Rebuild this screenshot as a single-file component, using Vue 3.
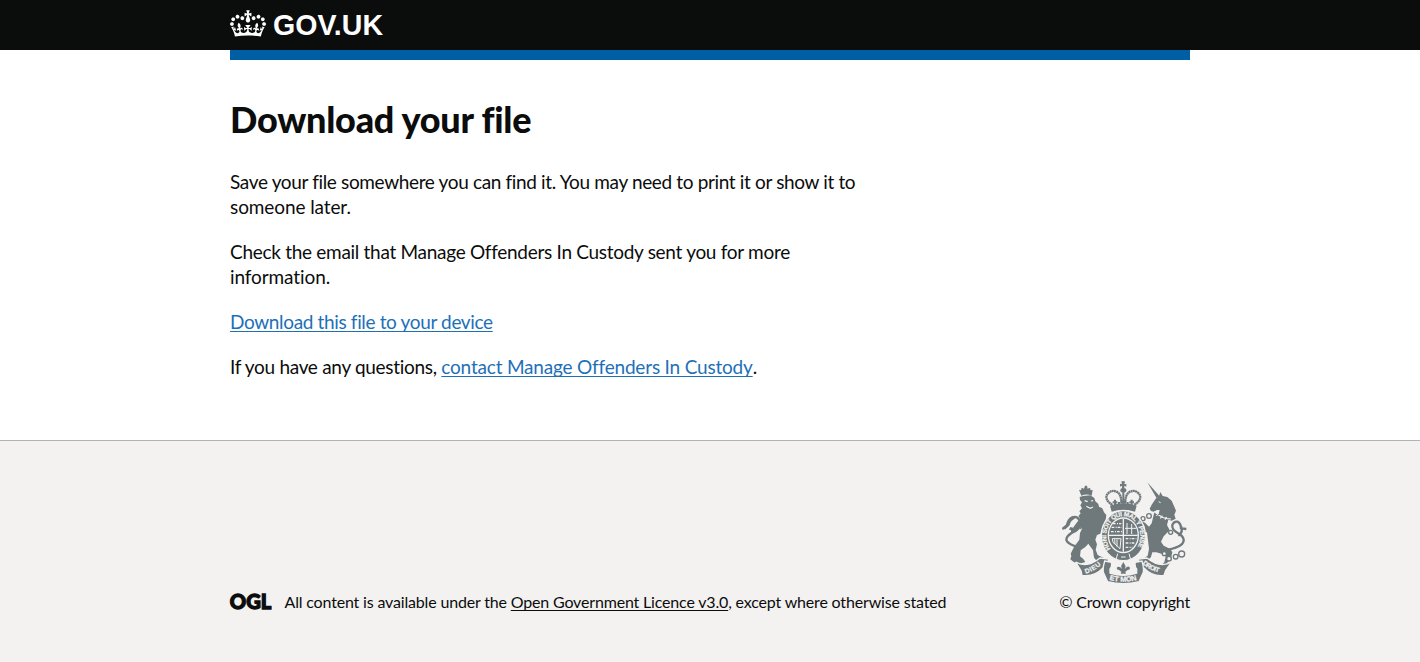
<script setup>
const service = 'Manage Offenders In Custody'
</script>

<template>
  <div class="page">
    <header class="header">
      <div class="container header-inner">
        <svg class="crown" viewBox="0 0 132 97" width="36" height="27" fill="currentColor" aria-hidden="true">
          <path d="M25 30.2c3.5 1.5 7.7-.2 9.1-3.7 1.5-3.6-.2-7.8-3.9-9.2-3.6-1.4-7.6.3-9.1 3.9-1.4 3.5.3 7.5 3.9 9zM9 39.5c3.6 1.5 7.8-.2 9.2-3.7 1.5-3.6-.2-7.8-3.9-9.1-3.6-1.5-7.6.2-9.1 3.8-1.4 3.5.3 7.5 3.8 9zM4.4 57.2c3.5 1.5 7.7-.2 9.1-3.8 1.5-3.6-.2-7.7-3.9-9.1-3.5-1.5-7.6.3-9.1 3.8-1.4 3.5.3 7.6 3.9 9.1zm38.3-21.4c3.5 1.5 7.7-.2 9.1-3.8 1.5-3.6-.2-7.7-3.9-9.1-3.6-1.5-7.6.3-9.1 3.8-1.3 3.6.4 7.7 3.9 9.1zm64.4-5.6c-3.6 1.5-7.8-.2-9.1-3.7-1.5-3.6.2-7.8 3.8-9.2 3.6-1.4 7.7.3 9.2 3.9 1.3 3.5-.4 7.5-3.9 9zm15.9 9.3c-3.6 1.5-7.7-.2-9.1-3.7-1.5-3.6.2-7.8 3.7-9.1 3.6-1.5 7.7.2 9.2 3.8 1.5 3.5-.3 7.5-3.8 9zm4.7 17.7c-3.6 1.5-7.8-.2-9.2-3.8-1.5-3.6.2-7.7 3.9-9.1 3.6-1.5 7.7.3 9.2 3.8 1.3 3.5-.4 7.6-3.9 9.1zM89.3 35.8c-3.6 1.5-7.8-.2-9.2-3.8-1.4-3.6.2-7.7 3.9-9.1 3.6-1.5 7.7.3 9.2 3.8 1.4 3.6-.3 7.7-3.9 9.1zM69.7 17.7l8.9 4.7V9.3l-8.9 2.8c-.2-.3-.5-.6-.9-.9L72.4 0H59.6l3.5 11.2c-.3.3-.6.5-.9.9l-8.8-2.8v13.1l8.8-4.7c.3.3.6.7.9.9l-5 15.4v.1c-.2.8-.4 1.6-.4 2.4 0 4.1 3.1 7.5 7 8.1h.2c.3 0 .7.1 1 .1.4 0 .7 0 1-.1h.2c4-.6 7.1-4.1 7.1-8.1 0-.8-.1-1.7-.4-2.4V34l-5.1-15.4c.4-.2.7-.6 1-.9zM66 92.8c16.9 0 32.8 1.1 47.1 3.2 4-16.9 8.9-26.7 14-33.5l-9.6-3.4c1 4.9 1.1 7.2 0 10.2-1.5-1.4-3-4.3-4.2-8.7L108.6 76c2.8-2 5-3.2 7.5-3.3-4.4 9.4-10 11.9-13.6 11.2-4.3-.8-6.3-4.6-5.6-7.9 1-4.7 5.7-5.9 8-.5 4.3-8.7-3-11.4-7.6-8.8 7.1-7.2 7.9-13.5 2.1-21.1-8 6.1-8.1 12.3-4.5 20.8-4.7-5.4-12.1-2.5-9.5 6.2 3.4-5.2 7.9-2 7.2 3.1-.6 4.3-6.4 7.8-13.5 7.2-10.3-.9-10.9-8-11.2-13.8 2.5-.5 7.1 1.8 11 7.3L80.2 60c-4.1 4.4-8 5.3-12.3 5.4 1.4-4.4 8-11.6 8-11.6H55.5s6.4 7.2 7.9 11.6c-4.2-.1-8-1-12.3-5.4l1.4 16.4c3.9-5.5 8.5-7.7 10.9-7.3-.3 5.8-.9 12.8-11.1 13.8-7.2.6-12.9-2.9-13.5-7.2-.7-5 3.8-8.3 7.1-3.1 2.7-8.7-4.6-11.6-9.4-6.2 3.7-8.5 3.6-14.7-4.6-20.8-5.8 7.6-5 13.9 2.2 21.1-4.7-2.6-11.9.1-7.7 8.8 2.3-5.5 7.1-4.2 8.1.5.7 3.3-1.3 7.1-5.7 7.9-3.5.7-9-1.8-13.5-11.2 2.5.1 4.7 1.3 7.5 3.3l-4.7-15.4c-1.2 4.4-2.7 7.2-4.3 8.7-1.1-3-.9-5.3 0-10.2l-9.5 3.4c5 6.9 9.9 16.7 14 33.5 14.8-2.1 30.8-3.2 47.7-3.2z" />
        </svg>
        <svg class="wordmark" width="112" height="30" aria-label="GOV.UK">
          <text x="0" y="25" textLength="110" lengthAdjust="spacingAndGlyphs">GOV.UK</text>
        </svg>
      </div>
    </header>
    <div class="container"><div class="bar"></div></div>

    <main class="container main">
      <h1>Download your file</h1>
      <p><span class="tight">Save your file somewhere you can find it. You may need to print it or show it to</span><br><span class="loose">someone later.</span></p>
      <p><span class="medium">Check the email that {{ service }} sent you for more</span><br><span class="loose">information.</span></p>
      <p><a class="tight" href="#">Download this file to your device</a></p>
      <p><span class="lead">If you have any questions, </span><a class="contact" href="#">contact {{ service }}</a>.</p>
    </main>

    <footer class="footer">
      <div class="container footer-inner">
        <div class="licence">
          <svg class="ogl" width="42" height="18" aria-label="OGL">
            <text x="-0.2" y="16" textLength="41.5" lengthAdjust="spacingAndGlyphs">OGL</text>
          </svg>
          <span class="licence-text">All content is available under the <a href="#">Open Government Licence v3.0</a>, except where otherwise stated</span>
        </div>
        <div class="copyright">
          <svg class="crest" viewBox="21 18 375 306" width="125" height="102" aria-hidden="true">
            <defs>
              <path id="garter" d="M167 222A51 59 0 1 1 243 222" />
              <path id="scrollLeft" d="M92 296Q122 287 142 265" />
              <path id="scrollMid" d="M163 314Q205 327 248 314" />
              <path id="scrollRight" d="M262 266Q284 287 318 294" />
            </defs>
            <g class="ink">
              <!-- lion -->
              <path d="M79 62L72 44l6 2 2-8 7 3 3-9h6l2 9 7-3 2 8 6-1-3 17q-15-7-31 0z" />
              <path d="M74 66l10-3 22-2 12 8 3 10 9 8 2 8 10 5 5 12 7 8-2 14-8 20-8 22-10 4-5 14 5 14-4 16 6 16 20 10 4 8-8 4-18-3-9-11-3-22-14-20-9 10-14 10-2 18 10 8 6 9-12 4-22-3-11-9 3-10-2-7 10-20 16-22 2-20 7-14-8 4 4-10-8 2 4-12-5-3 6-11-5-6 7-9-4-6 8-9-5-9 5-9-6-7z" />
              <path d="M84 120L66 142l-12 16-8-2-4 8 6 2 0 6 8-2 6 2 12-12 20-16z" />
              <!-- unicorn -->
              <path d="M277 22l37 42-9 6z" />
              <path d="M312 64l4-13 7 12 14 3 13 11 7 16 6 14-5 12 4 12-12 6-14-4-26-14 4-14h-8l-10 5-8-2-4-7 6-12 12-18z" />
              <path d="M298 112l42 22-4 16 8 16-18 18-8 16 8 12 20 10 6 10-4 18-10 12-6 14h-18l14-14 4-18-8-6-20-6h-12l-4 14-14 14h-16l10-10 10-8 4-20-6-50-22-4 2-9 14-1-6-10-20-4-6-9 8-6 10 8 14 6 12 12 8-10z" />
              <!-- crown -->
              <path d="M201 32l-6 3v-9l6 2-2-9h11l-2 9 6-2v9l-6-3v9h-7z" />
              <ellipse cx="205" cy="46" rx="9" ry="7" />
              <path d="M165 92q40-14 80 0l-5 18q-35-12-70 0z" />
            </g>
            <g class="line">
              <path d="M62 214Q24 202 38 184Q46 174 64 166Q80 154 74 136Q66 122 52 127Q38 134 36 153L22 162" stroke-width="7" />
              <path d="M58 127Q44 132 40 148L27 160" stroke-width="9" />
              <path d="M340 224Q388 214 386 194Q384 182 368 174Q350 164 352 150Q356 138 368 140Q378 146 378 160L394 162M378 154Q386 172 370 182" stroke-width="7" />
              <path d="M172 90Q146 72 158 56Q172 42 188 52Q199 60 200 86M238 90Q264 72 252 56Q238 42 222 52Q211 60 210 86" stroke-width="7" stroke-dasharray="6 1" />
              <path d="M180 90v-16M192 90v-9M218 90v-9M230 90v-16M173 82h14M223 82h14M205 52v36M196 80h18" stroke-width="6" />
            </g>
            <g class="line chain">
              <circle cx="282" cy="123" r="7" /><circle cx="264" cy="131" r="6" />
              <circle cx="347" cy="172" r="6" /><circle cx="328" cy="236" r="6" />
              <circle cx="342" cy="251" r="7" /><circle cx="362" cy="245" r="7" /><circle cx="380" cy="237" r="9" />
            </g>
            <g class="gap">
              <path d="M89 77l9 3M108 78l6-1M94 94l12 6 8-4" stroke-width="3.5" />
              <path d="M298 110q22 22 50 22M304 122l6-8M316 130l6-8M330 134l5-8" stroke-width="3.5" />
              <path d="M311 80l6 3" stroke-width="3" />
            </g>
            <!-- garter and shield -->
            <ellipse class="ink edge" cx="205" cy="182" rx="66" ry="75" />
            <ellipse class="hollow" cx="205" cy="181" rx="47" ry="54" />
            <ellipse class="ink" cx="205" cy="181" rx="43" ry="50" />
            <g class="gap">
              <path d="M162 181h86M205 132v98" stroke-width="4" />
              <path d="M170 157h31M168 170h33M174 146h25M212 191h32M212 204h30M212 217h20" stroke-width="4" stroke-dasharray="8 4 3 3" />
              <path d="M216 144v33M230 147v30M210 160h34M172 191h26l-3 30-21-19zM179 193l1 14M186 193v22" stroke-width="3" />
              <path d="M188 236l-5 18M222 236l5 18M198 246l14 0" stroke-width="3" />
            </g>
            <text class="motto"><textPath href="#garter" textLength="248">HONI SOIT QUI MAL Y PENSE</textPath></text>
            <!-- scrolls -->
            <path class="ink edge" d="M62 261q34 20 73-12l26 3q-5 14 4 22l-9 13-12-8q-25 27-63 22l-3-14z" />
            <path class="ink edge" d="M349 261q-34 20-73-12l-26 3q5 14-4 22l9 13 12-8q25 27 60 22l5-14z" />
            <path class="ink edge" d="M149 258l20 4q3 12-4 20v12q40 14 80 0v-12q-7-8-4-20l20-4q6 20 4 34l-13 28q-47 12-94 0l-13-28q-2-14 4-34z" />
            <path class="ink" d="M205 261l7 13-3 8q9-12 15-5 3 8-6 8l-7 5 2 6h-16l2-6-7-5q-9-1-6-8 7-6 15 5l-3-8z" />
            <g class="scroll">
              <text><textPath href="#scrollLeft" textLength="54">DIEU</textPath></text>
              <text class="mid"><textPath href="#scrollMid" textLength="84">ET MON</textPath></text>
              <text><textPath href="#scrollRight" textLength="56">DROIT</textPath></text>
            </g>
          </svg>
          <span class="copyright-text">© Crown copyright</span>
        </div>
      </div>
    </footer>
  </div>
</template>

<style>
body { margin: 0; background: #f3f2f1; }
</style>

<style scoped>
.page { min-height: 662px; display: flex; flex-direction: column; background: #fff; color: #0b0c0c; font-family: Lato, "Noto Sans", sans-serif; font-size: 19px; line-height: 25px; }
.container { width: 960px; margin: 0 auto; }
.header { background: #0b0c0c; color: #fff; height: 50px; }
.header-inner { display: flex; align-items: flex-start; }
.crown { margin-top: 10px; }
.wordmark { margin: 10px 0 0 7px; overflow: visible; font: bold 30px "Liberation Sans", Arial, sans-serif; fill: #fff; }
.bar { height: 10px; background: #005ea5; }
.main { height: 341px; padding-top: 39px; box-sizing: content-box; }
h1 { margin: 0 0 30px; font-size: 36px; line-height: 40px; font-weight: 900; letter-spacing: -0.25px; }
p { margin: 0 0 20px; white-space: nowrap; }
.tight { letter-spacing: -0.35px; }
.medium { letter-spacing: -0.29px; }
.loose { letter-spacing: -0.1px; }
.lead { letter-spacing: -0.3px; }
.contact { letter-spacing: -0.19px; }
.main a { color: #1d70b8; }
a { color: inherit; text-decoration: underline; text-decoration-thickness: 1px; text-underline-offset: 2px; text-decoration-skip-ink: none; }
.footer { flex: 1; border-top: 1px solid #b1b4b6; background: #f3f2f1; }
.footer-inner { display: flex; justify-content: space-between; align-items: flex-end; padding-top: 39px; font-size: 16px; line-height: 20px; white-space: nowrap; }
.licence { display: flex; align-items: center; }
.licence-text { letter-spacing: -0.17px; }
.copyright-text { letter-spacing: -0.2px; }
.ogl { margin-right: 12.5px; font: 900 21.5px Lato, sans-serif; fill: #0b0c0c; stroke: #0b0c0c; stroke-width: 1.3; overflow: visible; }
.copyright { display: flex; flex-direction: column; align-items: flex-end; }
.crest { margin: 1px 3px 9px 0; }
.ink { fill: #6f797c; }
.edge { stroke: #f3f2f1; stroke-width: 4; }
.line { fill: none; stroke: #6f797c; }
.chain { fill: #f3f2f1; stroke-width: 4; }
.hollow { fill: #f3f2f1; }
.gap { fill: none; stroke: #f3f2f1; }
.motto { font: bold 19px "Liberation Sans", sans-serif; fill: #f3f2f1; stroke: #f3f2f1; stroke-width: 0.7; }
.scroll { font: bold 20px "Liberation Sans", sans-serif; fill: #f3f2f1; stroke: #f3f2f1; stroke-width: 0.7; }
.mid { font-size: 22px; }
</style>
